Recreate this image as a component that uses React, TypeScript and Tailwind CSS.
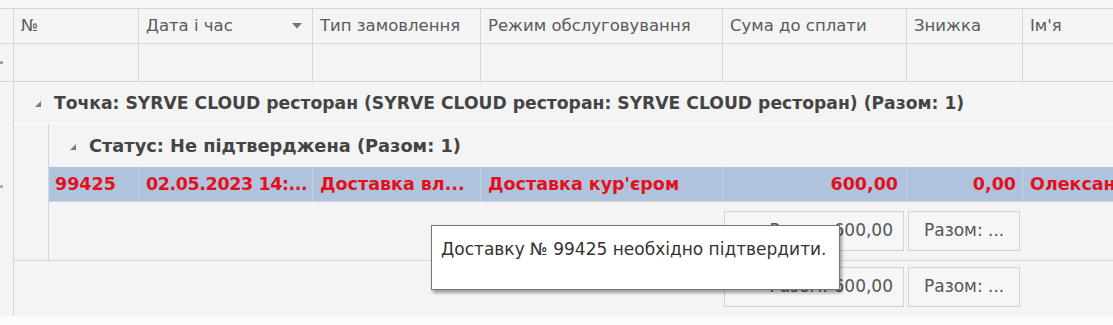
import React from 'react';

const font = { fontFamily: '"DejaVu Sans", Verdana, sans-serif' };

function ExpandGlyph() {
  return (
    <svg width="8" height="8" viewBox="0 0 8 8" className="shrink-0">
      <polygon points="7,1 7,7 1,7" fill="#7a7a7a" />
    </svg>
  );
}

function SortArrow() {
  return (
    <svg width="10" height="6" viewBox="0 0 10 6" className="shrink-0">
      <polygon points="0,0 10,0 5,5.5" fill="#777" />
    </svg>
  );
}

function SummaryBox({ text, align, width }: { text: string; align: 'left' | 'right'; width: string }) {
  return (
    <div
      className={`${width} h-[40px] border border-[#d2d2d2] bg-[#f6f6f6] flex items-center whitespace-nowrap text-[17px] text-[#555] ${
        align === 'right' ? 'justify-end pr-[10px]' : 'justify-start pl-[15px]'
      }`}
    >
      {text}
    </div>
  );
}

export default function App() {
  return (
    <div className="w-[1113px] h-[325px] bg-[#fbfbfb] overflow-hidden relative" style={font}>
      <div className="h-[8px] bg-[#f8f8f8]" />
      <div className="bg-[#f4f4f4]">
        {/* Header */}
        <div className="flex h-[36px] border-y border-[#d5d5d5] text-[16.5px] text-[#5a5a5a] whitespace-nowrap">
          <div className="w-[14px] border-r border-[#d5d5d5]" />
          <div className="w-[125px] border-r border-[#d5d5d5] flex items-center pl-[7px]">№</div>
          <div className="w-[174px] border-r border-[#d5d5d5] flex items-center pl-[7px] pr-[10px] justify-between">
            <span>Дата і час</span>
            <SortArrow />
          </div>
          <div className="w-[168px] border-r border-[#d5d5d5] flex items-center pl-[7px] overflow-hidden">Тип замовлення</div>
          <div className="w-[242px] border-r border-[#d5d5d5] flex items-center pl-[7px]">Режим обслуговування</div>
          <div className="w-[184px] border-r border-[#d5d5d5] flex items-center pl-[7px]">Сума до сплати</div>
          <div className="w-[116px] border-r border-[#d5d5d5] flex items-center pl-[7px]">Знижка</div>
          <div className="flex-1 flex items-center pl-[7px]">Ім'я</div>
        </div>

        {/* Filter row */}
        <div className="flex h-[38px] border-b border-[#d5d5d5]">
          <div className="w-[14px] border-r border-[#d5d5d5] flex items-center">
            <span className="w-[3px] h-[3px] rounded-full bg-[#888]" />
          </div>
          <div className="w-[125px] border-r border-[#d5d5d5]" />
          <div className="w-[174px] border-r border-[#d5d5d5]" />
          <div className="w-[168px] border-r border-[#d5d5d5]" />
          <div className="w-[242px] border-r border-[#d5d5d5]" />
          <div className="w-[184px] border-r border-[#d5d5d5]" />
          <div className="w-[116px] border-r border-[#d5d5d5]" />
          <div className="flex-1" />
        </div>

        {/* Body */}
        <div className="flex h-[234px]">
          <div className="w-[14px] border-r border-[#d5d5d5] shrink-0 relative">
            <span className="absolute left-0 top-[103px] w-[3px] h-[3px] rounded-full bg-[#999]" />
          </div>
          <div className="flex-1 flex flex-col min-w-0">
            {/* Outer group */}
            <div className="border-b border-[#d5d5d5]">
              <div className="h-[42px] flex items-center gap-[12px] pl-[20px] pt-[2px] border-b border-white text-[17.2px] font-bold text-[#444]">
                <ExpandGlyph />
                <span className="whitespace-nowrap">
                  Точка: SYRVE CLOUD ресторан (SYRVE CLOUD ресторан: SYRVE CLOUD ресторан) (Разом: 1)
                </span>
              </div>
              <div className="flex">
                <div className="w-[34px] shrink-0" />
                <div className="flex-1 min-w-0 border-l border-[#d5d5d5]">
                  <div className="h-[43px] flex items-center gap-[12px] pl-[20px] pt-[2px] text-[17.8px] font-bold text-[#444]">
                    <ExpandGlyph />
                    <span className="whitespace-nowrap">Статус: Не підтверджена (Разом: 1)</span>
                  </div>
                  {/* Data row */}
                  <div className="flex h-[35px] bg-[#afc3dd] border-b border-[#d0d0d0] text-[17.5px] font-bold text-[#e3101c] whitespace-nowrap overflow-hidden">
                    <div className="w-[90px] shrink-0 border-r border-[#c6d3e4] flex items-center pl-[6px]">99425</div>
                    <div className="w-[174px] shrink-0 border-r border-[#c6d3e4] flex items-center pl-[7px] overflow-hidden tracking-[-0.4px]">02.05.2023 14:...</div>
                    <div className="w-[168px] shrink-0 border-r border-[#c6d3e4] flex items-center pl-[7px] overflow-hidden">Доставка вл...</div>
                    <div className="w-[242px] shrink-0 border-r border-[#c6d3e4] flex items-center pl-[7px]">Доставка кур'єром</div>
                    <div className="w-[184px] shrink-0 border-r border-[#c6d3e4] flex items-center justify-end pr-[8px]">600,00</div>
                    <div className="w-[116px] shrink-0 border-r border-[#c6d3e4] flex items-center justify-end pr-[6px]">0,00</div>
                    <div className="flex-1 flex items-center pl-[7px]">Олександр</div>
                  </div>
                  {/* Group footer */}
                  <div className="h-[58px] flex items-start pt-[9px]">
                    <div className="w-[675px] shrink-0" />
                    <SummaryBox text="Разом: 600,00" align="right" width="w-[180px]" />
                    <div className="w-[4px] shrink-0" />
                    <SummaryBox text="Разом: ..." align="left" width="w-[112px]" />
                  </div>
                </div>
              </div>
            </div>
            {/* Outer footer */}
            <div className="h-[55px] flex items-start pt-[6px]">
              <div className="w-[710px] shrink-0" />
              <SummaryBox text="Разом: 600,00" align="right" width="w-[180px]" />
              <div className="w-[4px] shrink-0" />
              <SummaryBox text="Разом: ..." align="left" width="w-[112px]" />
            </div>
          </div>
        </div>
      </div>

      {/* Tooltip */}
      <div className="absolute left-[431px] top-[225px] w-[409px] h-[65px] bg-white border border-[#767676] shadow-[2px_3px_3px_rgba(0,0,0,0.35)] pl-[9px] pt-[11px] text-[17px] text-[#333] whitespace-nowrap">
        Доставку № 99425 необхідно підтвердити.
      </div>
    </div>
  );
}
